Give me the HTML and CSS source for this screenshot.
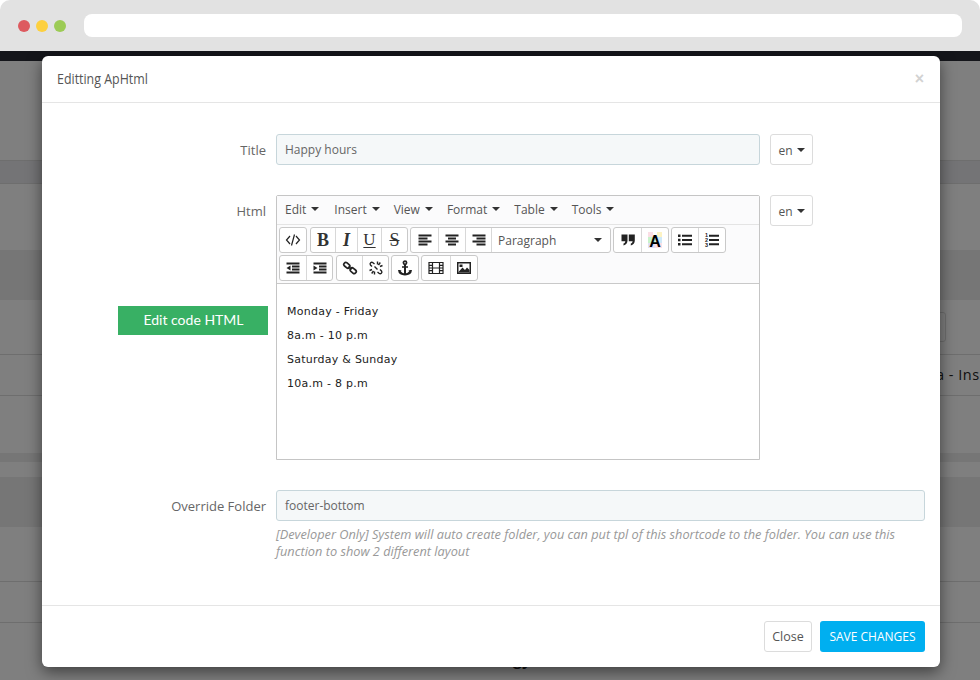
FILE: index.html
```html
<!DOCTYPE html>
<html lang="en">
<head>
<meta charset="utf-8">
<title>Editting ApHtml</title>
<link rel="stylesheet" href="styles.css">
</head>
<body>
<div class="viewport">
  <header class="chrome">
    <span class="dot dot-red"></span><span class="dot dot-yellow"></span><span class="dot dot-green"></span>
    <div class="urlbar"></div>
  </header>
  <div class="page">
    <div class="page-top"></div>
    <div class="page-gap-99"></div>
    <div class="page-band page-band-a"></div>
    <div class="page-gap-66"></div>
    <div class="page-band page-band-b"></div>
    <div class="page-row page-row-input"><div class="page-input"></div></div>
    <div class="page-row page-row-text">a - Ins</div>
    <div class="page-gap-57"></div>
    <div class="page-band page-band-c"></div>
    <div class="page-gap-15"></div>
    <div class="page-band page-band-b"></div>
    <div class="page-row page-row-55"></div>
    <div class="page-row page-row-41"></div>
    <div class="page-foot">gy</div>
    <div class="overlay"></div>
  </div>
  <section class="modal">
    <div class="modal-header">
      <h4 class="modal-title">Editting ApHtml</h4>
      <span class="modal-close">×</span>
    </div>
    <div class="modal-body">
      <div class="form-row">
        <div class="label-col"><label class="form-label">Title</label></div>
        <div class="field-col field-narrow"><div class="text-input">Happy hours</div></div>
        <button class="lang-btn">en<i class="caret"></i></button>
      </div>
      <div class="form-row form-row-html">
        <div class="label-col">
          <label class="form-label">Html</label>
          <button class="edit-code">Edit code HTML</button>
        </div>
        <div class="field-col field-narrow">
          <div class="editor">
            <div class="menubar">
              <span class="menu-item menu-first">Edit<i class="caret"></i></span>
              <span class="menu-item">Insert<i class="caret"></i></span>
              <span class="menu-item">View<i class="caret"></i></span>
              <span class="menu-item">Format<i class="caret"></i></span>
              <span class="menu-item">Table<i class="caret"></i></span>
              <span class="menu-item">Tools<i class="caret"></i></span>
            </div>
            <div class="toolbar">
              <div class="tool-row">
                <div class="tool-group">
                  <span class="tool w26"><svg class="ico" viewBox="0 0 16 16"><path class="line" d="M5 4 1.500 8 5 12M11 4l3.500 4L11 12M9.500 2.500l-3 11"/></svg></span>
                </div>
                <div class="tool-group">
                  <span class="tool w24 glyph glyph-b">B</span>
                  <span class="tool w22 glyph glyph-i">I</span>
                  <span class="tool w24 glyph glyph-u">U</span>
                  <span class="tool w26 glyph glyph-s">S</span>
                </div>
                <div class="tool-group">
                  <span class="tool w27"><svg class="ico" viewBox="0 0 16 16"><path d="M1.500 2.500h13v2h-13zM1.500 5.500h9v2h-9zM1.500 8.500h13v2h-13zM1.500 11.500h9v2h-9z"/></svg></span>
                  <span class="tool w27"><svg class="ico" viewBox="0 0 16 16"><path d="M1.500 2.500h13v2h-13zM4 5.500h8v2H4zM1.500 8.500h13v2h-13zM4 11.500h8v2H4z"/></svg></span>
                  <span class="tool w26"><svg class="ico" viewBox="0 0 16 16"><path d="M1.500 2.500h13v2h-13zM5.500 5.500h9v2h-9zM1.500 8.500h13v2h-13zM5.500 11.500h9v2h-9z"/></svg></span>
                  <span class="tool tool-select">Paragraph<i class="caret"></i></span>
                </div>
                <div class="tool-group">
                  <span class="tool w27"><svg class="ico" viewBox="0 0 16 16"><path d="M1.500 2.500h6v6c0 2.600-1.500 4.400-4 5v-2c1.100-.4 1.700-1.100 1.800-2.300H1.500zM8.800 2.500h6v6c0 2.600-1.500 4.400-4 5v-2c1.100-.4 1.700-1.100 1.800-2.300H8.800z"/></svg></span>
                  <span class="tool w27"><svg class="ico ico-color" viewBox="0 0 16 16"><rect class="sw-pink" x="1" y="0" width="5" height="5"/><rect class="sw-yellow" x="10" y="0" width="5" height="5"/><rect class="sw-green" x="1" y="5" width="7" height="6"/><rect class="sw-blue" x="8" y="5" width="7" height="6"/><rect class="sw-lilac" x="1" y="11" width="7" height="5"/><rect class="sw-pink" x="8" y="11" width="7" height="5"/><text class="ico-letter" x="8" y="14.500">A</text></svg></span>
                </div>
                <div class="tool-group">
                  <span class="tool w26"><svg class="ico" viewBox="0 0 16 16"><path d="M1 2.500h2.500V5H1zM1 6.800h2.500v2.500H1zM1 11h2.500v2.500H1zM5 2.800h10v2H5zM5 7h10v2H5zM5 11.200h10v2H5z"/></svg></span>
                  <span class="tool w27"><svg class="ico" viewBox="0 0 16 16"><path d="M5 2.800h10v2H5zM5 7h10v2H5zM5 11.200h10v2H5z"/><text class="ico-num" x="1" y="5">1</text><text class="ico-num" x="1" y="10">2</text><text class="ico-num" x="1" y="15">3</text></svg></span>
                </div>
              </div>
              <div class="tool-row">
                <div class="tool-group">
                  <span class="tool w26"><svg class="ico" viewBox="0 0 16 16"><path d="M1.500 2.500h13v2h-13zM7 5.500h7.500v2H7zM7 8.500h7.500v2H7zM1.500 11.500h13v2h-13zM5.500 5.500v5L1.500 8z"/></svg></span>
                  <span class="tool w26"><svg class="ico" viewBox="0 0 16 16"><path d="M1.500 2.500h13v2h-13zM7 5.500h7.500v2H7zM7 8.500h7.500v2H7zM1.500 11.500h13v2h-13zM1.500 5.500v5l4-2.500z"/></svg></span>
                </div>
                <div class="tool-group">
                  <span class="tool w25"><svg class="ico" viewBox="0 0 16 16"><g class="line line-thick"><rect x="1.500" y="3.300" width="6.600" height="4" rx="2" transform="rotate(40 4.800 5.300)"/><rect x="7.900" y="8.700" width="6.600" height="4" rx="2" transform="rotate(40 11.200 10.700)"/><path d="M6.500 6.500 9.500 9.500"/></g></svg></span>
                  <span class="tool w26"><svg class="ico" viewBox="0 0 16 16"><g class="line line-mid"><path d="M6.500 4 5 2.700C3.300 1.500 1.300 3.300 2.500 5l1.500 1.500M9.500 12l1.500 1.300c1.700 1.200 3.700-.6 2.500-2.300L12 9.500M6.500 6.500 9.500 9.500M9.500 1.500v3M12.300 2.500l-1.800 2.500M14.500 5.500 12 6.500M1.500 10.500 4 9.500M3.700 13.500l1.800-2.500M6.500 14.500v-3"/></g></svg></span>
                </div>
                <div class="tool-group">
                  <span class="tool w26"><svg class="ico" viewBox="0 0 16 16"><circle class="line line-thick" cx="8" cy="2.800" r="1.600"/><path d="M7 4.300h2V13.200c1.800-.2 3-1.200 3.500-2.700L11 10h4l-.7 2.800C13.300 14.500 10 15.500 8 15.500s-5.300-1-6.300-2.700L1 10h4l-1.500.5C4 12 5.200 13 7 13.200zM5 6.300h6v1.500H5z"/></svg></span>
                </div>
                <div class="tool-group">
                  <span class="tool w28"><svg class="ico" viewBox="0 0 16 16"><path class="line" d="M1 2.500h14v11H1zM4.500 2.500v11M11.500 2.500v11M1 5.300h3.500M1 8h3.500M1 10.700h3.500M11.500 5.300H15M11.500 8H15M11.500 10.700H15M4.500 8h7"/></svg></span>
                  <span class="tool w27"><svg class="ico" viewBox="0 0 16 16"><path fill-rule="evenodd" d="M1 2h14v12H1zM2.500 3.500v9h11v-9z"/><path d="M2.500 12 6.500 7.500 9 10l2-2.500 2.500 2.500v2.500h-11zM3.500 4.500h3v2.500h-3z"/></svg></span>
                </div>
              </div>
            </div>
            <div class="editor-content">
              <p>Monday - Friday</p>
              <p>8a.m - 10 p.m</p>
              <p>Saturday &amp; Sunday</p>
              <p>10a.m - 8 p.m</p>
            </div>
          </div>
        </div>
        <button class="lang-btn">en<i class="caret"></i></button>
      </div>
      <div class="form-row">
        <div class="label-col"><label class="form-label">Override Folder</label></div>
        <div class="field-col field-wide">
          <div class="text-input">footer-bottom</div>
          <p class="help">[Developer Only] System will auto create folder, you can put tpl of this shortcode to the folder. You can use this function to show 2 different layout</p>
        </div>
      </div>
    </div>
    <div class="modal-footer">
      <button class="btn-close">Close</button>
      <button class="btn-save">SAVE CHANGES</button>
    </div>
  </section>
</div>
</body>
</html>
```
FILE: styles.css
```css
* { box-sizing: border-box; }
html, body { margin: 0; padding: 0; background: #fff; }
body { font-family: "Open Sans", "Liberation Sans", sans-serif; color: #555; }
button { font: inherit; cursor: pointer; }
.viewport { position: relative; width: 980px; height: 680px; overflow: hidden; }

.chrome {
  position: relative; z-index: 3; height: 51px; background: #e2e2e2;
  border-radius: 10px 10px 0 0; display: flex; align-items: center; padding: 0 18px;
}
.dot { width: 12px; height: 12px; border-radius: 50%; margin-right: 6px; }
.dot-red { background: #dd5a5f; }
.dot-yellow { background: #fdd03e; }
.dot-green { background: #9ccb55; }
.urlbar { width: 878px; height: 23px; margin-left: 12px; background: #fff; border-radius: 8px; }

.page { position: relative; height: 629px; background: #fff; overflow: hidden; }
.overlay { position: absolute; inset: 0; background: rgba(0, 0, 0, .5); }
.page-top { height: 10px; background: #292a34; }
.page-gap-99 { height: 99px; }
.page-gap-66 { height: 66px; }
.page-gap-57 { height: 57px; }
.page-gap-15 { height: 15px; }
.page-band { background: #ededed; }
.page-band-a { height: 24px; background: #e8e8ec; border-top: 1px solid #ddd; border-bottom: 1px solid #ddd; }
.page-band-b { height: 50px; }
.page-band-c { height: 9px; }
.page-row { border-bottom: 1px solid #ddd; }
.page-row-input { height: 55px; padding: 12px 0 0 700px; }
.page-input { width: 246px; height: 30px; border: 1px solid #ddd; border-radius: 3px; }
.page-row-text { height: 41px; padding: 10px 0 0 936px; font-size: 14.500px; line-height: 20px; color: #222; white-space: nowrap; letter-spacing: .5px; }
.page-row-55 { height: 55px; }
.page-row-41 { height: 41px; }
.page-foot { padding: 26px 0 0 513px; font-size: 16px; font-weight: 700; line-height: 20px; color: #222; }

.modal {
  position: absolute; z-index: 2; left: 42px; top: 56px; width: 898px; height: 611px;
  background: #fff; border-radius: 6px; box-shadow: 0 5px 15px rgba(0, 0, 0, .5);
  display: flex; flex-direction: column;
}
.modal-header {
  height: 47px; border-bottom: 1px solid #e5e5e5; padding: 0 15px;
  display: flex; align-items: center; justify-content: space-between;
}
.modal-title { margin: 0; font: 400 14px/20px "Liberation Sans Narrow", "Open Sans", sans-serif; color: #555; transform: scaleX(.887); transform-origin: left center; }
.modal-close { font: 700 16px/1 "Liberation Sans", sans-serif; color: #d2d2d2; margin-right: 1px; }

.modal-body { flex: 1; padding-top: 31px; display: flex; flex-direction: column; gap: 30px; }
.form-row { display: flex; align-items: flex-start; }
.label-col { width: 224px; margin-right: 10px; display: flex; flex-direction: column; align-items: flex-end; flex: none; }
.form-label { height: 31px; font-size: 13px; line-height: 33px; color: #666; }
.field-col { flex: none; }
.field-narrow { width: 484px; }
.field-wide { width: 649px; }
.text-input {
  height: 31px; background: #f5f8f9; border: 1px solid #c7d6db; border-radius: 3px;
  padding: 0 8px; font-size: 12px; line-height: 30px; color: #666;
}
.lang-btn {
  width: 43px; height: 31px; margin-left: 10px; padding: 1px 0 0; background: #fff; border: 1px solid #dcdcdc;
  border-radius: 3px; font-size: 12px; color: #555; display: flex; align-items: center; justify-content: center;
}
.caret {
  display: inline-block; width: 0; height: 0; margin-left: 4px;
  border-top: 4px solid #333; border-left: 4px solid transparent; border-right: 4px solid transparent;
}
.edit-code {
  width: 150px; height: 29px; margin: 80px -2px 0 0; padding: 0 0 2px 1px; border: 0;
  background: #38b064; color: #fff; font: 400 14px/27px Lato, sans-serif;
}

.editor { height: 265px; border: 1px solid #c5c5c5; border-radius: 2px 2px 0 0; display: flex; flex-direction: column; background: #fff; }
.menubar { height: 29px; flex: none; background: #fbfbfc; border-bottom: 1px solid #e4e4e4; padding: 0 0 2px 8px; display: flex; align-items: center; font-size: 12px; color: #555; }
.menu-item { display: inline-flex; align-items: center; margin-right: 14px; white-space: nowrap; }
.menu-first { margin-right: 15px; }
.menu-item .caret { margin-left: 5px; }
.toolbar { height: 59px; flex: none; background: #fbfbfc; border-bottom: 1px solid #c9c9c9; padding: 2px 0 0 2px; display: flex; flex-direction: column; gap: 2px; }
.tool-row { display: flex; gap: 2px; height: 26px; }
.tool-group { display: flex; height: 26px; background: #fff; border: 1px solid #c9c9c9; border-radius: 3px; }
.tool-group:first-child { margin-right: 1px; }
.tool { display: flex; align-items: center; justify-content: center; height: 24px; border-left: 1px solid #d8d8d8; color: #222; flex: none; }
.tool:first-child { border-left: 0; }
.w22 { width: 22px; } .w24 { width: 24px; } .w25 { width: 25px; } .w26 { width: 26px; } .w27 { width: 27px; } .w28 { width: 28px; }
.glyph { font-family: "Liberation Serif", serif; font-size: 18px; color: #333; }
.glyph-b { font-weight: 700; }
.glyph-i { font-style: italic; font-weight: 700; }
.glyph-u { text-decoration: underline; text-underline-offset: 2px; font-size: 17px; }
.glyph-s { text-decoration: line-through; font-size: 18px; }
.tool-select { width: 119px; justify-content: space-between; padding: 0 8px 0 6px; font-family: "Open Sans", sans-serif; font-size: 12px; color: #555; }
.ico { width: 16px; height: 16px; fill: #222; display: block; }
.line { fill: none; stroke: #222; stroke-width: 1.200; }
.line-thick { stroke-width: 1.700; }
.line-mid { stroke-width: 1.400; }
.ico-color { overflow: visible; }
.sw-pink { fill: #fbdfe6; } .sw-yellow { fill: #fdf3c4; } .sw-green { fill: #c8f3cb; } .sw-blue { fill: #cfe9f8; } .sw-lilac { fill: #e2def5; }
.ico-letter { font: 700 16px "Liberation Sans", sans-serif; text-anchor: middle; fill: #000; }
.ico-num { font: 700 5.500px "Liberation Sans", sans-serif; fill: #222; }
.editor-content { flex: 1; padding: 16px 10px 0; font: 11px/24px "DejaVu Sans", Verdana, sans-serif; letter-spacing: .25px; color: #222; }
.editor-content p { margin: 0; }

.help { margin: 5px 0 0; font-size: 12.750px; font-style: italic; line-height: 17px; color: #999; }

.modal-footer { height: 62px; flex: none; border-top: 1px solid #e5e5e5; padding: 15px; display: flex; justify-content: flex-end; gap: 8px; }
.btn-close { width: 48px; height: 31px; padding: 0; background: #fff; border: 1px solid #dcdcdc; border-radius: 3px; font-size: 12.5px; color: #555; }
.btn-save { width: 105px; height: 31px; padding: 0; background: #00aff0; border: 0; border-radius: 3px; font-size: 12px; color: #fff; }
```
